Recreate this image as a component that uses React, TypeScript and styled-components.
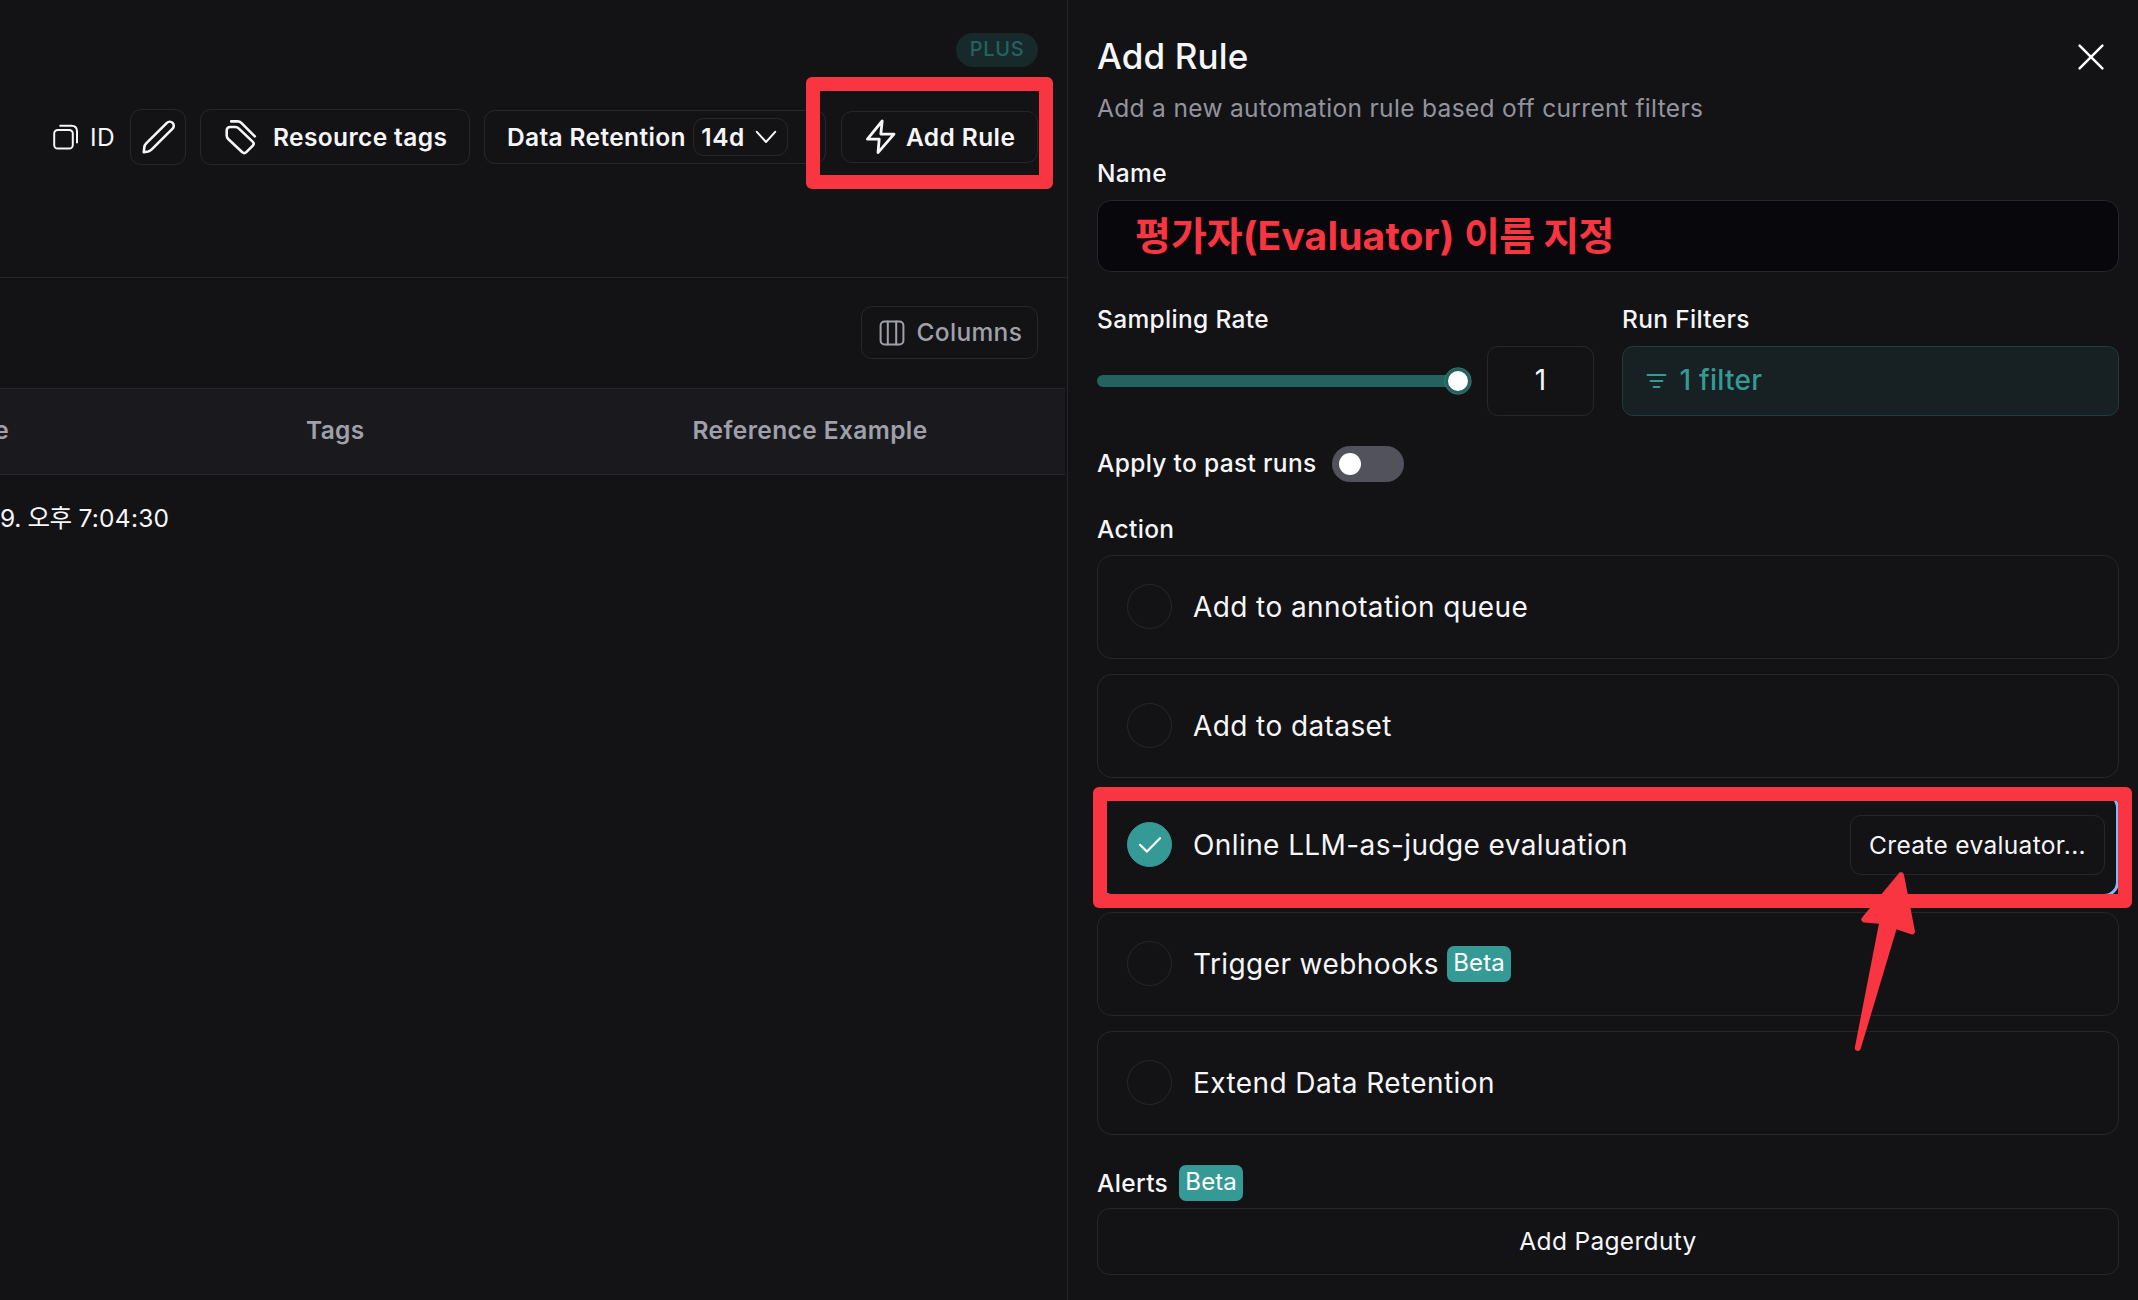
import React from "react";
import styled, { createGlobalStyle } from "styled-components";

const ink = "#f6f6f8";
const muted = "#a0a0ab";
const line = "#26272b";
const teal = "#359a95";
const red = "#fa3542";

const Global = createGlobalStyle`
  * { box-sizing: border-box; }
  body { margin: 0; background: #131316; overflow: hidden; font-family: Inter, "Noto Sans CJK KR", sans-serif; color: ${ink}; }
`;

const Page = styled.div`
  position: relative;
  display: flex;
  width: 2138px;
  height: 1300px;
  overflow: hidden;
  background: #131316;
`;

const Label = styled.span<{ $size?: number; $weight?: number; $ls?: number; $color?: string; $lift?: number; $drop?: number }>`
  padding-top: ${(p) => p.$drop ?? 0}px;
  padding-bottom: ${(p) => p.$lift ?? 0}px;
  font-size: ${(p) => p.$size ?? 24.5}px;
  font-weight: ${(p) => p.$weight ?? 400};
  letter-spacing: ${(p) => p.$ls ?? 0.33}px;
  color: ${(p) => p.$color ?? ink};
  line-height: 1.4;
  white-space: pre;
`;

const Kern = styled.span<{ $ls: number }>`
  letter-spacing: ${(p) => p.$ls}px;
`;

const Main = styled.main`
  display: flex;
  flex-direction: column;
  width: 1068px;
  border-right: 1px solid ${line};
`;

const TopArea = styled.header`
  display: flex;
  flex-direction: column;
  height: 278px;
  padding: 33px 29px 0 53px;
  border-bottom: 1px solid ${line};
`;

const PlanBadge = styled.div`
  display: flex;
  align-items: center;
  justify-content: center;
  align-self: flex-end;
  width: 82px;
  height: 34px;
  margin-bottom: 42px;
  border-radius: 17px;
  background: #18292b;
`;

const Toolbar = styled.div`
  display: flex;
  align-items: center;
  height: 56px;
`;

const IdGroup = styled.div`
  display: flex;
  align-items: center;
  gap: 11px;
  width: 77px;
`;

const Button = styled.div<{ $w: number; $h: number; $gap?: number; $ml?: number; $pl?: number }>`
  display: flex;
  flex: none;
  align-items: center;
  gap: ${(p) => p.$gap ?? 0}px;
  width: ${(p) => p.$w}px;
  height: ${(p) => p.$h}px;
  margin-left: ${(p) => p.$ml ?? 0}px;
  padding-left: ${(p) => p.$pl ?? 0}px;
  border: 1px solid ${line};
  border-radius: 11px;
`;

const TableTools = styled.div`
  display: flex;
  align-items: center;
  justify-content: flex-end;
  height: 110px;
  padding: 0 29px 1px 0;
`;

const TableHead = styled.div`
  display: grid;
  grid-template-columns: 306px 386.5px 1fr;
  align-items: center;
  width: 1065px;
  height: 87px;
  padding-bottom: 2px;
  border-top: 1px solid ${line};
  border-bottom: 1px solid ${line};
  background: #1a1a1e;
`;

const CutCell = styled.div`
  display: flex;
  justify-content: flex-end;
  width: 9px;
  overflow: hidden;
`;

const TableRow = styled.div`
  display: flex;
  align-items: center;
  height: 86px;
`;

const Drawer = styled.aside`
  display: flex;
  flex: 1;
  flex-direction: column;
  padding: 32px 19px 0 29px;
`;

const DrawerHead = styled.div`
  display: flex;
  align-items: center;
  justify-content: space-between;
  height: 50px;
  padding-right: 14px;
`;

const Line = styled.div<{ $h: number; $mt?: number; $gap?: number }>`
  display: flex;
  align-items: center;
  gap: ${(p) => p.$gap ?? 0}px;
  height: ${(p) => p.$h}px;
  margin-top: ${(p) => p.$mt ?? 0}px;
`;

const NameInput = styled.div`
  display: flex;
  align-items: center;
  height: 72px;
  margin-top: 10px;
  padding-left: 37px;
  border: 1px solid ${line};
  border-radius: 14px;
  background: #08080c;
`;

const Columns = styled.div`
  display: grid;
  grid-template-columns: 497px 497px;
  column-gap: 28px;
  margin-top: 29px;
`;

const Sampling = styled.div`
  display: flex;
  align-items: center;
  justify-content: space-between;
  margin-top: 9px;
`;

const Track = styled.div`
  display: flex;
  align-items: center;
  justify-content: flex-end;
  width: 374px;
  height: 12px;
  border-radius: 6px;
  background: linear-gradient(90deg, #24625f 364px, transparent 364px);
`;

const Thumb = styled.div`
  flex: none;
  width: 26px;
  height: 26px;
  border: 3.5px solid #24625f;
  border-radius: 50%;
  background: #fff;
  box-shadow: 0 0 0 0.5px #4f8a88;
`;

const ValueBox = styled.div`
  display: flex;
  align-items: center;
  justify-content: center;
  width: 107px;
  height: 70px;
  border: 1px solid ${line};
  border-radius: 11px;
`;

const FilterBox = styled.div`
  display: flex;
  align-items: center;
  gap: 12.5px;
  height: 70px;
  margin-top: 9px;
  padding-left: 23px;
  border: 1px solid #1d3d3d;
  border-radius: 11px;
  background: #172022;
`;

const Switch = styled.div`
  display: flex;
  align-items: center;
  width: 72px;
  height: 36px;
  padding-left: 7px;
  border-radius: 18px;
  background: #51525c;
`;

const Knob = styled.div`
  width: 22px;
  height: 22px;
  border-radius: 50%;
  background: #fff;
`;

const Cards = styled.div`
  display: flex;
  flex-direction: column;
  gap: 15px;
  margin-top: 9px;
`;

const Card = styled.div<{ $focus?: boolean }>`
  display: flex;
  align-items: center;
  height: 104px;
  padding: 0 13px 0 29px;
  border: 1px solid ${line};
  border-radius: 15px;
  ${(p) => p.$focus && "border: 3px solid #84b9f5; padding: 0 11px 0 27px;"}
`;

const Radio = styled.div<{ $on?: boolean }>`
  display: flex;
  align-items: center;
  justify-content: center;
  width: 45px;
  height: 45px;
  margin: 0 21px 1px 0;
  border: 1px solid ${(p) => (p.$on ? teal : line)};
  border-radius: 50%;
  background: ${(p) => (p.$on ? teal : "transparent")};
`;

const Beta = styled.div<{ $ml: number }>`
  display: flex;
  align-items: center;
  justify-content: center;
  width: 64px;
  height: 36px;
  margin-left: ${(p) => p.$ml}px;
  padding-bottom: 2px;
  border-radius: 7px;
  background: ${teal};
`;

const CreateButton = styled.div`
  display: flex;
  align-items: center;
  justify-content: center;
  width: 255px;
  height: 60px;
  margin-left: auto;
  border: 1px solid ${line};
  border-radius: 11px;
`;

const WideButton = styled.div`
  display: flex;
  align-items: center;
  justify-content: center;
  height: 67px;
  margin-top: 7px;
  border: 1px solid ${line};
  border-radius: 13px;
`;

const Mark = styled.div<{ $x: number; $y: number; $w: number; $h: number }>`
  position: absolute;
  left: ${(p) => p.$x}px;
  top: ${(p) => p.$y}px;
  width: ${(p) => p.$w}px;
  height: ${(p) => p.$h}px;
  border: 14px solid ${red};
  border-radius: 6px;
`;

const Arrow = styled.svg`
  position: absolute;
  left: 1850px;
  top: 866px;
`;

const stroke = { fill: "none", stroke: ink, strokeLinecap: "round", strokeLinejoin: "round" } as const;

const CopyIcon = () => (
  <svg width="26" height="26" viewBox="0 0 26 26" {...stroke} strokeWidth="2">
    <rect x="1.2" y="6" width="18.6" height="18.6" rx="3.6" />
    <path d="M7.2 1.7H18.5C22 1.7 24 3.8 24 7.2V18.4" />
  </svg>
);
const PencilIcon = () => (
  <svg width="34" height="34" viewBox="0 0 34 34" {...stroke} strokeWidth="2.6">
    <path d="M1.8 32.2L2.3 27.3C2.5 25.6 3.1 24.5 4.2 23.4L24.9 2.9C26.5 1.3 29 1.3 30.6 2.9C32.2 4.5 32.2 7 30.6 8.6L10 29.2C8.8 30.4 7.8 31.2 6.2 31.5Z" />
  </svg>
);
const TagsIcon = () => (
  <svg width="32" height="36" viewBox="0 0 32 36" {...stroke} strokeWidth="2.6">
    <path d="M6.2 2.4H12.6C14.2 2.4 15.2 2.8 16.3 3.9L29.8 17.4" />
    <path d="M1.7 11.5C1.7 9.3 3 8 5.2 8H10.4C11.8 8 12.7 8.4 13.7 9.4L27.6 22.6C28.9 23.9 28.9 25.6 27.6 26.9L21.3 33.2C20 34.5 18.6 34.5 17.3 33.2L3.2 20C2.1 18.9 1.7 18 1.7 16.6Z" />
  </svg>
);
const BoltIcon = () => (
  <svg width="32" height="36" viewBox="0 0 32 36" {...stroke} strokeWidth="2.8">
    <path d="M17.2 2L2.4 20.2H14.2L13 33.6L29 15.1H15.8Z" />
  </svg>
);
const ChevronIcon = () => (
  <svg width="22" height="14" viewBox="0 0 22 14" {...stroke} strokeWidth="2">
    <path d="M1.8 1.8L11 12L20.2 1.8" />
  </svg>
);
const ColumnsIcon = () => (
  <svg width="26" height="26" viewBox="0 0 26 26" {...stroke} stroke={muted} strokeWidth="2">
    <rect x="1.6" y="1.6" width="22.8" height="22.8" rx="4" />
    <path d="M8.8 1.6V24.4M17.2 1.6V24.4" />
  </svg>
);
const CloseIcon = () => (
  <svg width="28" height="28" viewBox="0 0 28 28" {...stroke} stroke="#fff" strokeWidth="2.5">
    <path d="M2.6 2.6L25.4 25.4M25.4 2.6L2.6 25.4" />
  </svg>
);
const FilterIcon = () => (
  <svg width="21" height="16" viewBox="0 0 21 16" {...stroke} stroke={teal} strokeWidth="1.9">
    <path d="M1.5 2H19.5M4.5 8H16.5M7.5 14H13.5" />
  </svg>
);
const CheckIcon = () => (
  <svg width="24" height="18" viewBox="0 0 24 18" {...stroke} stroke="#fff" strokeWidth="2.2">
    <path d="M2 8.8L9 15.6L22 2.2" />
  </svg>
);

const Option = ({ label, on, children }: { label: string; on?: boolean; children?: React.ReactNode }) => (
  <Card $focus={on}>
    <Radio $on={on}>{on && <CheckIcon />}</Radio>
    <Label $size={28} $ls={0.41} $drop={1}>{label}</Label>
    {children}
  </Card>
);

export default function App() {
  return (
    <Page>
      <Global />
      <Main>
        <TopArea>
          <PlanBadge><Label $size={20} $weight={500} $ls={0.7} $lift={2} $color="#22635f">PLUS</Label></PlanBadge>
          <Toolbar>
            <IdGroup><CopyIcon /><Label>ID</Label></IdGroup>
            <Button $w={56} $h={56} $pl={11}><PencilIcon /></Button>
            <Button $w={270} $h={56} $ml={14} $pl={24} $gap={16}><TagsIcon /><Label $weight={600} $ls={0.38}>Resource tags</Label></Button>
            <Button $w={342} $h={54} $ml={14} $pl={22} $gap={7.5}>
              <Label $weight={600} $ls={0.36}>Data Retention</Label>
              <Button $w={95} $h={38} $pl={7} $gap={10}><Label $weight={600} $ls={0.5}>14d</Label><ChevronIcon /></Button>
            </Button>
            <Button $w={197} $h={52} $ml={15} $pl={23} $gap={9}><BoltIcon /><Label $weight={600} $ls={0.4}>Add Rule</Label></Button>
          </Toolbar>
        </TopArea>
        <TableTools>
          <Button $w={177} $h={53} $pl={17} $gap={11.5}><ColumnsIcon /><Label $weight={500} $color={muted}>Columns</Label></Button>
        </TableTools>
        <TableHead>
          <CutCell><Label $weight={600} $color={muted}>Time</Label></CutCell>
          <Label $weight={600} $color={muted}>Tags</Label>
          <Label $weight={600} $ls={0.4} $color={muted}>Reference Example</Label>
        </TableHead>
        <TableRow><Label $ls={0.25}><Kern $ls={-0.35}>9. </Kern><Kern $ls={-0.6}>오후</Kern> 7:04:30</Label></TableRow>
      </Main>
      <Drawer>
        <DrawerHead><Label $size={35} $weight={500} $ls={0.15} $lift={2}>Add Rule</Label><CloseIcon /></DrawerHead>
        <Line $h={34} $mt={9}><Label $color="#93939e">Add a new automation rule based off current filters</Label></Line>
        <Line $h={34} $mt={31}><Label $weight={500}>Name</Label></Line>
        <NameInput><Label $size={39} $weight={700} $ls={0} $color={red}>평가자<Kern $ls={0.18}>(Evaluator) </Kern><Kern $ls={-0.6}>이름 지정</Kern></Label></NameInput>
        <Columns>
          <div>
            <Line $h={36}><Label $weight={500}>Sampling Rate</Label></Line>
            <Sampling><Track><Thumb /></Track><ValueBox><Label $size={28}>1</Label></ValueBox></Sampling>
          </div>
          <div>
            <Line $h={36}><Label $weight={500}>Run Filters</Label></Line>
            <FilterBox><FilterIcon /><Label $size={28} $weight={500} $ls={0.25} $color={teal}>1 filter</Label></FilterBox>
          </div>
        </Columns>
        <Line $h={36} $mt={30} $gap={15}><Label $weight={500} $lift={2}>Apply to past runs</Label><Switch><Knob /></Switch></Line>
        <Line $h={34} $mt={30}><Label $weight={500}>Action</Label></Line>
        <Cards>
          <Option label="Add to annotation queue" />
          <Option label="Add to dataset" />
          <Option label="Online LLM-as-judge evaluation" on>
            <CreateButton><Label>Create evaluator...</Label></CreateButton>
          </Option>
          <Option label="Trigger webhooks"><Beta $ml={8}><Label $size={24} $ls={0.1} $color="#fff">Beta</Label></Beta></Option>
          <Option label="Extend Data Retention" />
        </Cards>
        <Line $h={36} $mt={30}><Label $weight={500}>Alerts</Label><Beta $ml={11}><Label $size={24} $ls={0.1} $color="#fff">Beta</Label></Beta></Line>
        <WideButton><Label>Add Pagerduty</Label></WideButton>
      </Drawer>
      <Mark $x={806} $y={77} $w={247} $h={112} />
      <Mark $x={1092.5} $y={787} $w={1039.5} $h={121} />
      <Arrow width="80" height="196" viewBox="1850 866 80 196">
        <path d="M1901 875.3L1864.4 919.5L1882.5 921L1857.8 1048L1894.5 925.5L1912 931.5Z" fill={red} stroke={red} strokeWidth="6" strokeLinejoin="round" />
      </Arrow>
    </Page>
  );
}
